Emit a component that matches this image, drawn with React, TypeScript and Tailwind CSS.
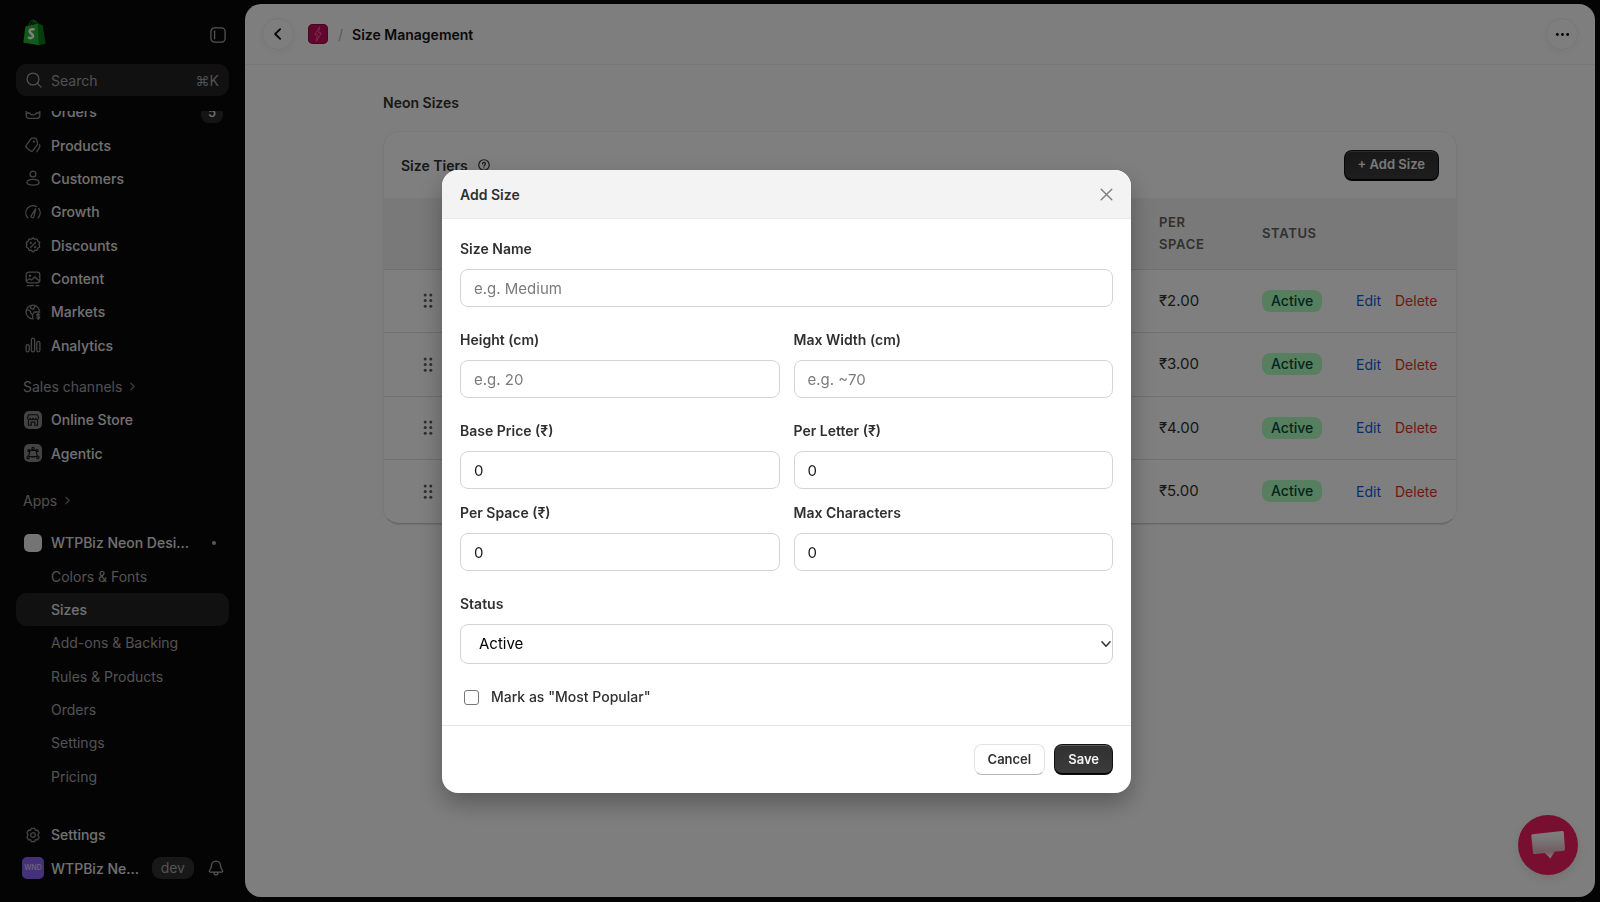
import { useState } from "react";
import type { ReactNode } from "react";

const svg = {
  viewBox: "0 0 16 16",
  fill: "none",
  stroke: "currentColor",
  strokeWidth: 1.3,
  strokeLinecap: "round",
  strokeLinejoin: "round",
  "aria-hidden": true,
} as const;

function Icon({ children, className = "size-4" }: { children: ReactNode; className?: string }) {
  return (
    <svg {...svg} className={`shrink-0 ${className}`}>
      {children}
    </svg>
  );
}

function ShopLogo() {
  return (
    <svg viewBox="0 0 23 27" className="h-[27px] w-[23px]" aria-hidden="true">
      <path d="M5.6 7.5C6.2 3.2 8.6 1 10.2 1.2c1.8.2 2.2 3 2 5.3M8.2 7C8.9 3.6 11 1.6 12.4 2c1.4.4 1.8 2 1.9 3.8" fill="none" stroke="#1ca82c" strokeWidth="1" />
      <path d="M2.3 7.4 15.6 4.4 16 26.2 0.3 23.6Z" fill="#22b534" />
      <path d="M15.6 4.4 19.7 6.2 22.6 24.8 16 26.2Z" fill="#0d7a1c" />
      <path d="M11.6 10.8c-1.4-.9-4.7-.9-5 1.4-.3 2.5 3.8 2.4 3.5 5-.3 2.3-3.4 2.5-5 .9" fill="none" stroke="#fff" strokeWidth="2.5" />
    </svg>
  );
}

const OrdersIcon = () => (
  <Icon>
    <rect x="1.2" y="1.7" width="13.6" height="12.6" rx="2.8" />
    <path d="M1.4 9h3.1c.6 0 .9 1.8 2 1.8h3c1.1 0 1.4-1.8 2-1.8h3.1" />
  </Icon>
);
const ProductsIcon = () => (
  <Icon>
    <path d="M7.6 1.2h2.3c.8 0 1.5.5 1.7 1.3l.9 3.5c.2.7 0 1.3-.4 1.9l-4 5.4c-.7.9-1.9 1.1-2.8.4L1.800 11C.9 10.3.7 9.1 1.4 8.2l4.100-5.900c.5-.7 1.200-1.100 2.100-1.100Z" />
    <path d="M14.6 7.8c.4.8.4 1.6 0 2.3l-2.7 4.7" />
    <circle cx="8.9" cy="4.6" r=".5" fill="currentColor" />
  </Icon>
);
const CustomersIcon = () => (
  <Icon>
    <circle cx="8" cy="4" r="2.9" />
    <path d="M1.9 12.5c0-2 2.7-3.2 6.1-3.2s6.1 1.2 6.1 3.2c0 1.7-2.6 2.6-6.1 2.6s-6.1-.9-6.1-2.6Z" />
  </Icon>
);
const GrowthIcon = () => (
  <Icon>
    <path d="M2.800 13.700A7.100 7.100 0 0 1 11.400 2.600M13.700 4.500a7.100 7.100 0 0 1-.5 9.200" />
    <path d="M10.700 4.800 9 12.300a1.500 1.500 0 1 1-2.300-1.400Z" />
  </Icon>
);
const DiscountsIcon = () => (
  <Icon>
    <path d="m8 .9 1.800 1.300 2.200-.1.8 2.100 1.900 1.200-.6 2.100L14.700 10l-1.900 1.200-.8 2.100-2.200-.1L8 15.100l-1.800-1.900-2.200.100-.8-2.100L1.300 10l.6-2.500-.6-2.100 1.900-1.200.8-2.100 2.200.100Z" />
    <path d="m5.500 10.500 5-5" />
    <circle cx="5.800" cy="5.800" r=".5" fill="currentColor" />
    <circle cx="10.200" cy="10.200" r=".5" fill="currentColor" />
  </Icon>
);
const ContentIcon = () => (
  <Icon>
    <rect x="1.200" y="1.200" width="13.600" height="10.600" rx="2.500" />
    <path d="m1.500 9.800 3-2 2 1.200 3.200-3 4.700 4M2.200 14.700h6.300M11 14.700h2.800" />
    <circle cx="5" cy="4.700" r=".6" fill="currentColor" />
  </Icon>
);
const MarketsIcon = () => (
  <Icon>
    <path d="M14.400 6.300A6.800 6.800 0 1 0 8 14.800M2 5.500l3.300 1.600.5 2.200L7.600 11v3.500M6 1.900l-.3 2.400 2.800 1 1.500-3.500M14.800 8H9.200l-1 1.800" />
    <path d="M14.600 10.500c-.6-.6-2.800-.7-2.800.7 0 1.500 2.900.7 2.900 2.200 0 1.300-2.300 1.300-3 .5M13.200 9.300v6.200" />
  </Icon>
);
const AnalyticsIcon = () => (
  <Icon>
    <rect x="1.100" y="7.600" width="3.100" height="7.200" rx="1.500" />
    <rect x="6.400" y="1.200" width="3.200" height="13.600" rx="1.600" />
    <rect x="11.800" y="4.400" width="3.100" height="10.400" rx="1.500" />
  </Icon>
);
const SettingsIcon = () => (
  <Icon>
    <path d="M6.400 1.300h3.200l.8 2 2.100-.2 1.600 2.700L12.900 8l1.200 2.200-1.600 2.700-2.100-.2-.8 2H6.400l-.8-2-2.100.2-1.600-2.700L3.100 8 1.900 5.800l1.600-2.700 2.100.2Z" />
    <circle cx="8" cy="8" r="2.300" />
  </Icon>
);
const StoreIcon = () => (
  <span className="grid size-[18px] shrink-0 place-items-center rounded-[5px] bg-[#868686] text-[#161616]">
    <Icon className="size-[14px]">
      <path d="M3 2h10l1.300 3.500c0 2.300-3 2.600-3.200.4-.2 2.200-3 2.200-3.100 0-.2 2.200-3 2.200-3.200 0C4.600 8.100 1.700 7.800 1.700 5.500ZM2.800 8.500V14H6v-3.500h4V14h3.200V8.500" />
    </Icon>
  </span>
);
const AgenticIcon = () => (
  <span className="grid size-[18px] shrink-0 place-items-center rounded-[5px] bg-[#868686] text-[#161616]">
    <Icon className="size-[14px]">
      <path d="M4.500 5h7l1.500 7H3Z" />
      <circle cx="8" cy="2.800" r="1.300" />
      <circle cx="3.300" cy="5.300" r="1.200" />
      <circle cx="12.700" cy="5.300" r="1.200" />
      <circle cx="2.500" cy="13" r="1.400" />
      <circle cx="13.500" cy="13" r="1.400" />
      <path d="M6.500 12.500h3" />
    </Icon>
  </span>
);

const Chevron = () => (
  <Icon className="size-[9px] text-[#808080]">
    <path d="m5 2 6 6-6 6" strokeWidth="2" />
  </Icon>
);

const mainNav = [
  { label: "Orders", icon: <OrdersIcon />, badge: "5" },
  { label: "Products", icon: <ProductsIcon /> },
  { label: "Customers", icon: <CustomersIcon /> },
  { label: "Growth", icon: <GrowthIcon /> },
  { label: "Discounts", icon: <DiscountsIcon /> },
  { label: "Content", icon: <ContentIcon /> },
  { label: "Markets", icon: <MarketsIcon /> },
  { label: "Analytics", icon: <AnalyticsIcon /> },
];
const channels = [
  { label: "Online Store", icon: <StoreIcon /> },
  { label: "Agentic", icon: <AgenticIcon /> },
];
const appPages = ["Colors & Fonts", "Sizes", "Add-ons & Backing", "Rules & Products", "Orders", "Settings", "Pricing"];

function NavItem({ label, icon, badge }: { label: string; icon: ReactNode; badge?: string }) {
  return (
    <li className="flex">
      <a href="#" className="flex flex-1 items-center pr-1.5 pl-2">
        <span className="grid w-[18px] place-items-center text-[#8a8a8a]">{icon}</span>
        <span className="ml-[9px] flex-1">{label}</span>
        {badge && <span className="rounded-lg bg-[#2b2b2b] px-[7px] text-[13px] leading-[22px]">{badge}</span>}
      </a>
    </li>
  );
}

function Sidebar() {
  return (
    <aside className="flex w-[245px] shrink-0 flex-col px-4 pb-[17px] text-[14px] font-medium text-[#e3e3e3]">
      <div className="flex h-16 items-center justify-between pr-[3px] pl-[7px]">
        <ShopLogo />
        <button type="button" aria-label="Collapse sidebar" className="pt-1.5 text-[#a6a6a6]">
          <Icon>
            <rect x=".9" y=".9" width="14.200" height="14.200" rx="3.500" />
            <path d="M4.600 4.200v7.600" />
          </Icon>
        </button>
      </div>
      <button type="button" className="flex h-8 shrink-0 items-center rounded-[11px] bg-[#232323] px-2.5 font-normal text-[#a0a0a0]">
        <Icon className="size-4">
          <circle cx="7" cy="7" r="5.900" />
          <path d="m11.300 11.300 3.800 3.800" />
        </Icon>
        <span className="ml-[9px] flex-1 text-left">Search</span>
        <span>⌘K</span>
      </button>

      <nav className="mt-[15px] min-h-0 flex-1 overflow-hidden">
        <ul className="-mt-4 grid h-[267px] auto-rows-fr">
          {mainNav.map((n) => (
            <NavItem key={n.label} {...n} />
          ))}
        </ul>
        <h2 className="mt-[14px] flex h-[20px] items-center gap-1.5 pl-[7px] font-normal text-[#a0a0a0]">
          Sales channels <Chevron />
        </h2>
        <ul className="mt-[7px] grid h-[67px] auto-rows-fr">
          {channels.map((n) => (
            <NavItem key={n.label} {...n} />
          ))}
        </ul>
        <h2 className="mt-[20px] flex h-[20px] items-center gap-1.5 pl-[7px] font-normal text-[#a0a0a0]">
          Apps <Chevron />
        </h2>
        <ul className="mt-4 grid h-[267px] auto-rows-fr">
          <li className="flex items-center pr-[13px] pl-2">
            <span className="size-[18px] rounded-[5px] bg-[#e8e8e8]" />
            <a href="#" className="ml-[9px] flex-1">
              WTPBiz Neon Desi...
            </a>
            <span className="size-1 rounded-full bg-[#b0b0b0]" />
          </li>
          {appPages.map((p) =>
            p === "Sizes" ? (
              <li key={p} className="flex">
                <a href="#" aria-current="page" className="flex flex-1 items-center rounded-[11px] bg-[#232323] pl-[35px]">
                  {p}
                </a>
              </li>
            ) : (
              <li key={p} className="flex">
                <a href="#" className="flex flex-1 items-center pl-[35px] font-normal text-[#a6a6a6]">
                  {p}
                </a>
              </li>
            ),
          )}
        </ul>
      </nav>

      <ul className="grid h-[67px] shrink-0 auto-rows-fr">
        <NavItem label="Settings" icon={<SettingsIcon />} />
        <li className="flex items-center pr-[5px] pl-1.5">
          <span className="grid size-[22px] place-items-center rounded-[5px] bg-[#8b62f2] text-[7px] text-[#d8ccff]">WND</span>
          <a href="#" className="ml-[7px] flex-1">
            WTPBiz Ne...
          </a>
          <span className="rounded-[9px] bg-[#303030] px-[9px] leading-[22px] font-normal text-[#a6a6a6]">dev</span>
          <button type="button" aria-label="Notifications" className="ml-[14px] text-[#a6a6a6]">
            <Icon>
              <path d="M8 1.100c-2.700 0-4.500 2-4.500 4.500 0 2.400-.7 3.300-1.900 4.700-.6.800-.2 1.800.8 1.800h11.200c1 0 1.400-1 .8-1.800-1.200-1.400-1.900-2.300-1.900-4.700 0-2.500-1.800-4.500-4.500-4.500ZM6 12.300c0 3.400 4 3.400 4 0" />
            </Icon>
          </button>
        </li>
      </ul>
    </aside>
  );
}

const darkButton =
  "rounded-lg bg-[#303030] bg-linear-to-b from-[#303030] to-[#3c3c3c] px-[14px] text-[13px] font-semibold text-[#f3f3f3] shadow-[inset_0_0_0_1px_#111,inset_0_-2px_0_0_#000,inset_0_2px_0_0_#5a5a5a]";

const prices = ["₹2.00", "₹3.00", "₹4.00", "₹5.00"];

function SizeTable() {
  return (
    <table className="h-[325px] w-full table-fixed border-collapse text-left text-[15px]">
      <colgroup>
        <col className="w-[88px]" />
        <col />
        <col className="w-[103px]" />
        <col className="w-[94px]" />
        <col className="w-[100px]" />
      </colgroup>
      <thead>
        <tr className="h-[71px] bg-[#f3f3f3] text-[13px] leading-[22px] tracking-wider text-[#616161]">
          <td />
          <td />
          <th className="font-semibold">
            PER
            <br />
            SPACE
          </th>
          <th className="font-semibold">STATUS</th>
          <td />
        </tr>
      </thead>
      <tbody>
        {prices.map((price) => (
          <tr key={price} className="h-[63px] border-t border-[#dedede]">
            <td>
              <svg viewBox="0 0 10 16" className="mx-auto h-[15px] w-[10px]" fill="#5c5c5c" aria-hidden="true">
                {[2, 8].map((x) => [2, 8, 14].map((y) => <circle key={`${x}-${y}`} cx={x} cy={y} r="1.600" />))}
              </svg>
            </td>
            <td />
            <td>{price}</td>
            <td>
              <span className="inline-block rounded-lg bg-[#affebf] px-[9px] text-[14px] leading-[22px] font-medium text-[#014b40]">
                Active
              </span>
            </td>
            <td>
              <div className="flex gap-[14px] text-[14px]">
                <a href="#" className="text-[#0f5bd6]">
                  Edit
                </a>
                <a href="#" className="text-[#dc361c]">
                  Delete
                </a>
              </div>
            </td>
          </tr>
        ))}
      </tbody>
    </table>
  );
}

const inputClass =
  "h-[38px] w-full rounded-lg border border-[#d4d4d4] bg-white px-[13px] text-[15px] text-[#1a1a1a] placeholder:text-[#7b7b7b]";

function Field({ id, label, placeholder, value }: { id: string; label: string; placeholder?: string; value?: string }) {
  return (
    <div className="flex flex-col gap-2.5">
      <label htmlFor={id} className="text-[14px] leading-5 font-semibold">
        {label}
      </label>
      <input id={id} type="text" placeholder={placeholder} defaultValue={value} className={inputClass} />
    </div>
  );
}

function AddSizeDialog() {
  const [popular, setPopular] = useState(false);
  return (
    <div className="fixed inset-0 flex items-start justify-center bg-black/50 pt-[170px] pr-[27px]">
      <form
        role="dialog"
        aria-labelledby="dialog-title"
        className="w-full max-w-[689px] overflow-hidden rounded-2xl bg-white text-[#303030] shadow-[0_10px_24px_rgba(0,0,0,0.3)]"
      >
        <div className="flex h-[49px] items-center justify-between border-b border-[#e8e8e8] bg-[#f3f3f3] px-[18px]">
          <h2 id="dialog-title" className="text-[14px] font-semibold">
            Add Size
          </h2>
          <button type="button" aria-label="Close" className="text-[#808080]">
            <Icon className="size-[13px]">
              <path d="m1.500 1.500 13 13m0-13-13 13" strokeWidth="1.800" />
            </Icon>
          </button>
        </div>
        <div className="flex flex-col gap-[23px] px-[18px] pt-5 pb-[18px]">
          <Field id="name" label="Size Name" placeholder="e.g. Medium" />
          <div className="grid grid-cols-2 gap-[14px]">
            <Field id="height" label="Height (cm)" placeholder="e.g. 20" />
            <Field id="width" label="Max Width (cm)" placeholder="e.g. ~70" />
          </div>
          <div className="grid grid-cols-2 gap-[14px]">
            <Field id="base" label="Base Price (₹)" value="0" />
            <Field id="letter" label="Per Letter (₹)" value="0" />
            <Field id="space" label="Per Space (₹)" value="0" />
            <Field id="chars" label="Max Characters" value="0" />
          </div>
          <div className="flex flex-col gap-2.5">
            <label htmlFor="status" className="text-[14px] leading-5 font-semibold">
              Status
            </label>
            <div className="grid items-center">
              <select
                id="status"
                className="col-start-1 row-start-1 h-10 w-full appearance-none rounded-lg border border-[#d2d3d8] bg-white px-[18px] font-['Inter','Liberation_Sans',sans-serif] text-[15px] text-black"
              >
                <option>Active</option>
              </select>
              <Icon className="pointer-events-none col-start-1 row-start-1 mr-0.5 size-[10px] justify-self-end text-[#303030]">
                <path d="m1.500 4.500 6.500 7 6.500-7" strokeWidth="2.400" />
              </Icon>
            </div>
          </div>
          <label className="flex items-center gap-3 pl-1 text-[14px] leading-5 font-medium">
            <input
              type="checkbox"
              checked={popular}
              onChange={(e) => setPopular(e.target.checked)}
              className="size-[15px] appearance-none rounded-[3px] border border-[#767676] bg-white checked:bg-[#303030]"
            />
            Mark as "Most Popular"
          </label>
        </div>
        <div className="flex justify-end gap-[9px] border-t border-[#e3e3e3] p-[18px]">
          <button
            type="button"
            className="h-[31px] rounded-lg border border-[#e3e3e3] border-b-[#b5b5b5] bg-white px-[13px] text-[13px] font-semibold"
          >
            Cancel
          </button>
          <button type="button" className={`h-[31px] ${darkButton}`}>
            Save
          </button>
        </div>
      </form>
    </div>
  );
}

export default function App() {
  return (
    <div className="flex h-screen bg-[#090909] font-['Inter','Liberation_Sans',sans-serif]">
      <Sidebar />
      <main className="relative mt-1 mr-[5px] mb-[5px] min-w-0 flex-1 overflow-hidden rounded-2xl bg-[#fdfdfd] text-[#303030]">
        <header className="flex h-[61px] items-center border-b border-[#f0f0f0] px-[17px]">
          <button
            type="button"
            aria-label="Back"
            className="grid size-8 place-items-center rounded-full border border-[#ececec] text-black shadow-[0_2px_10px_rgba(0,0,0,0.06)]"
          >
            <Icon className="size-[14px]">
              <path d="M10.500 2.500 4.700 8l5.800 5.500" strokeWidth="2" />
            </Icon>
          </button>
          <span className="ml-[14px] grid size-5 place-items-center rounded-[5px] bg-[#c20e5a] shadow-[inset_0_0_0_1px_#900c45]">
            <svg viewBox="0 0 10 16" className="h-4 w-2.5" aria-hidden="true">
              <path d="M6.500.8 1.800 8.700h2.500L3.400 15.200 8.300 7H5.500Z" fill="none" stroke="#ff5f9f" strokeWidth=".9" />
            </svg>
          </span>
          <span className="ml-[10px] text-[14px] text-[#b5b5b5]">/</span>
          <h1 className="ml-[9px] flex-1 text-[14px] font-semibold text-[#141414]">Size Management</h1>
          <button
            type="button"
            aria-label="More actions"
            className="grid size-8 place-items-center rounded-full border border-[#ececec] text-black shadow-[0_2px_10px_rgba(0,0,0,0.06)]"
          >
            <svg viewBox="0 0 16 16" className="size-[15px]" aria-hidden="true">
              <circle cx="2.500" cy="8" r="1.500" />
              <circle cx="8" cy="8" r="1.500" />
              <circle cx="13.500" cy="8" r="1.500" />
            </svg>
          </button>
        </header>
        <div className="mx-auto max-w-[1074px] pt-[28px]">
          <h2 className="text-[14px] leading-5 font-semibold">Neon Sizes</h2>
          <section className="mt-[18px] overflow-hidden rounded-2xl border border-[#f2f2f2] border-b-[#cfcfcf] bg-white shadow-[0_1px_1px_rgba(0,0,0,0.1)]">
            <div className="flex h-[66px] items-center px-[17px]">
              <h3 className="text-[14px] font-semibold">Size Tiers</h3>
              <Icon className="ml-2.5 size-3">
                <circle cx="8" cy="8" r="7" strokeWidth="1.600" />
                <path d="M6 6.600c0-2.600 4-2.600 4-.2 0 1.500-2 1.500-2 3M8 11.700v.2" strokeWidth="1.700" />
              </Icon>
              <button type="button" className={`ml-auto h-[31px] ${darkButton}`}>
                + Add Size
              </button>
            </div>
            <SizeTable />
          </section>
        </div>
        <button
          type="button"
          aria-label="Open chat"
          className="absolute right-[17px] bottom-[22px] grid size-[60px] place-items-center rounded-full bg-[#f01f60] shadow-[0_4px_12px_rgba(0,0,0,0.1)]"
        >
          <svg viewBox="0 0 36 30" className="h-[30px] w-9" aria-hidden="true">
            <defs>
              <linearGradient id="bubble" x1="0" y1="0" x2="0" y2="1">
                <stop offset="0" stopColor="#fff" />
                <stop offset=".35" stopColor="#f3eaed" />
                <stop offset=".75" stopColor="#e2b8c6" />
                <stop offset="1" stopColor="#fff" />
              </linearGradient>
            </defs>
            <path d="M2.500 4.200 32 .900q1.600-.200 1.800 1.400L35 19q.2 1.600-1.400 1.800l-9 1-4.200 6.700-5.600-5.600-10.200 1q-1.400.2-1.600-1.400L1.300 5.700q-.1-1.300 1.200-1.500Z" fill="url(#bubble)" />
          </svg>
        </button>
      </main>
      <AddSizeDialog />
    </div>
  );
}
